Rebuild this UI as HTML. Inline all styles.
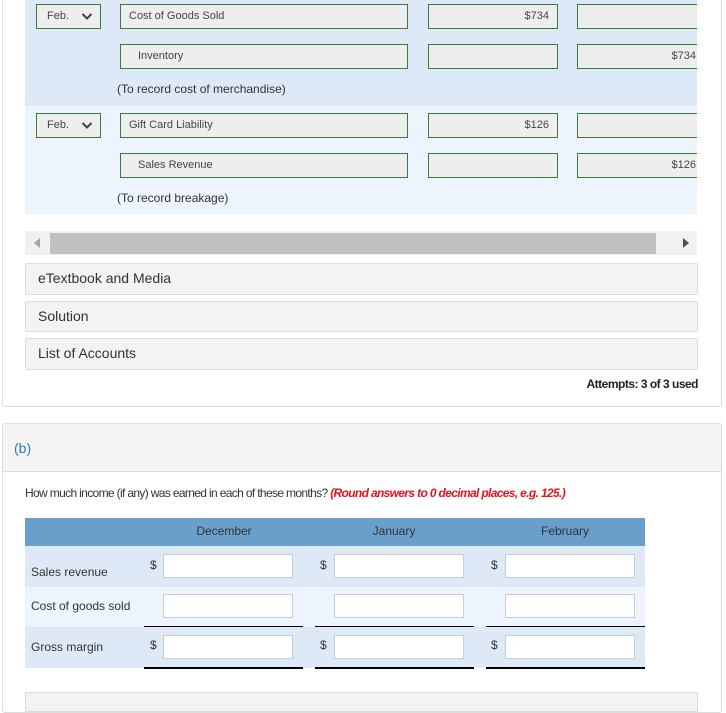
<!DOCTYPE html>
<html><head><style>
body{margin:0;width:726px;height:698px;overflow:hidden;background:#fff;font-family:"Liberation Sans",sans-serif;position:relative;color:#333}
.a{position:absolute;box-sizing:border-box}
.g{border:1px solid #3a7a3a;background:#eee;font-size:11px;color:#444;line-height:22px}
.w{border:1px solid #ccc;background:#fff;height:24px}
.bx{background:#f3f3f3;border:1px solid #ddd;border-radius:2px;font-size:14px;color:#333;line-height:29px;padding-left:12px}
.t{font-size:12px;color:#333}
.clip{position:absolute;left:0;top:0;width:697px;height:220px;overflow:hidden}
.chev{position:absolute;left:44px;top:7px}
</style></head><body>
<div class="a" style="left:2px;top:-5px;width:720px;height:412px;border:1px solid #ddd;border-radius:3px"></div>
<div class="a" style="left:25px;top:0;width:672px;height:106px;background:#dde9f7"></div>
<div class="a" style="left:25px;top:106px;width:672px;height:108px;background:#edf4fd"></div>

<div class="a g" style="left:36px;top:4px;width:65px;height:25px;padding-left:10px">Feb.<svg class="chev" width="12" height="9" viewBox="0 0 12 9"><path d="M1.5 2 L6 6.5 L10.5 2" fill="none" stroke="#444" stroke-width="2"/></svg></div>
<div class="a g" style="left:120px;top:4px;width:288px;height:25px;padding-left:8px">Cost of Goods Sold</div>
<div class="a g" style="left:428px;top:4px;width:130px;height:25px;text-align:right;padding-right:8px">$734</div>
<div class="clip">
<div class="a g" style="left:577px;top:4px;width:130px;height:25px"></div>
<div class="a g" style="left:577px;top:44px;width:130px;height:25px;text-align:right;padding-right:10px">$734</div>
<div class="a g" style="left:577px;top:113px;width:130px;height:25px"></div>
<div class="a g" style="left:577px;top:153px;width:130px;height:25px;text-align:right;padding-right:10px">$126</div>
</div>
<div class="a g" style="left:120px;top:44px;width:288px;height:25px;padding-left:17px">Inventory</div>
<div class="a g" style="left:428px;top:44px;width:130px;height:25px"></div>
<div class="a" style="left:117px;top:82px;font-size:12px;color:#333">(To record cost of merchandise)</div>

<div class="a g" style="left:36px;top:113px;width:65px;height:25px;padding-left:10px">Feb.<svg class="chev" width="12" height="9" viewBox="0 0 12 9"><path d="M1.5 2 L6 6.5 L10.5 2" fill="none" stroke="#444" stroke-width="2"/></svg></div>
<div class="a g" style="left:120px;top:113px;width:288px;height:25px;padding-left:8px">Gift Card Liability</div>
<div class="a g" style="left:428px;top:113px;width:130px;height:25px;text-align:right;padding-right:8px">$126</div>
<div class="a g" style="left:120px;top:153px;width:288px;height:25px;padding-left:17px">Sales Revenue</div>
<div class="a g" style="left:428px;top:153px;width:130px;height:25px"></div>
<div class="a" style="left:117px;top:191px;font-size:12px;color:#333">(To record breakage)</div>

<div class="a" style="left:25px;top:231px;width:672px;height:24px;background:#f1f1f1"></div>
<div class="a" style="left:50px;top:233px;width:606px;height:21px;background:#c1c1c1"></div>
<div class="a" style="left:34px;top:238px;width:0;height:0;border-top:5px solid transparent;border-bottom:5px solid transparent;border-right:6px solid #a3a3a3"></div>
<div class="a" style="left:683px;top:238px;width:0;height:0;border-top:5px solid transparent;border-bottom:5px solid transparent;border-left:6px solid #505050"></div>

<div class="a bx" style="left:25px;top:263px;width:673px;height:32px">eTextbook and Media</div>
<div class="a bx" style="left:25px;top:301px;width:673px;height:31px">Solution</div>
<div class="a bx" style="left:25px;top:338px;width:673px;height:32px">List of Accounts</div>
<div class="a" style="right:28px;top:377px;font-size:12px;color:#222;font-weight:bold;letter-spacing:-0.5px">Attempts: 3 of 3 used</div>

<div class="a" style="left:2px;top:423px;width:720px;height:290px;border:1px solid #ddd;border-radius:3px"></div>
<div class="a" style="left:3px;top:424px;width:718px;height:48px;background:#f4f4f4;border-bottom:1px solid #ddd"></div>
<div class="a" style="left:14px;top:440px;font-size:14px;color:#2a7ab9">(b)</div>
<div class="a" style="left:25px;top:486px;font-size:12px;color:#333;letter-spacing:-0.65px">How much income (if any) was earned in each of these months? <i style="color:#e8111b;font-weight:bold">(Round answers to 0 decimal places, e.g. 125.)</i></div>

<div class="a" style="left:25px;top:518px;width:620px;height:28px;background:#6a9fcc"></div>
<div class="a t" style="left:164px;top:524px;width:120px;text-align:center">December</div>
<div class="a t" style="left:334px;top:524px;width:120px;text-align:center">January</div>
<div class="a t" style="left:505px;top:524px;width:120px;text-align:center">February</div>
<div class="a" style="left:25px;top:546px;width:620px;height:41px;background:#dde9f7"></div>
<div class="a" style="left:25px;top:587px;width:620px;height:40px;background:#edf4fd"></div>
<div class="a" style="left:25px;top:627px;width:620px;height:41px;background:#dde9f7"></div>
<div class="a t" style="left:31px;top:565px">Sales revenue</div>
<div class="a t" style="left:31px;top:599px">Cost of goods sold</div>
<div class="a t" style="left:31px;top:640px">Gross margin</div>

<div class="a t" style="left:150px;top:558px">$</div><div class="a t" style="left:320px;top:558px">$</div><div class="a t" style="left:491px;top:558px">$</div>
<div class="a t" style="left:150px;top:638px">$</div><div class="a t" style="left:320px;top:638px">$</div><div class="a t" style="left:491px;top:638px">$</div>

<div class="a w" style="left:163px;top:554px;width:130px"></div><div class="a w" style="left:334px;top:554px;width:130px"></div><div class="a w" style="left:505px;top:554px;width:130px"></div>
<div class="a w" style="left:163px;top:594px;width:130px"></div><div class="a w" style="left:334px;top:594px;width:130px"></div><div class="a w" style="left:505px;top:594px;width:130px"></div>
<div class="a w" style="left:163px;top:635px;width:130px"></div><div class="a w" style="left:334px;top:635px;width:130px"></div><div class="a w" style="left:505px;top:635px;width:130px"></div>

<div class="a" style="left:144px;top:626px;width:159px;height:1px;background:#000"></div>
<div class="a" style="left:315px;top:626px;width:159px;height:1px;background:#000"></div>
<div class="a" style="left:486px;top:626px;width:159px;height:1px;background:#000"></div>
<div class="a" style="left:144px;top:667px;width:159px;height:2px;background:#000"></div>
<div class="a" style="left:315px;top:667px;width:159px;height:2px;background:#000"></div>
<div class="a" style="left:486px;top:667px;width:159px;height:2px;background:#000"></div>

<div class="a" style="left:25px;top:692px;width:673px;height:20px;background:#f3f3f3;border:1px solid #ddd"></div>
</body></html>
